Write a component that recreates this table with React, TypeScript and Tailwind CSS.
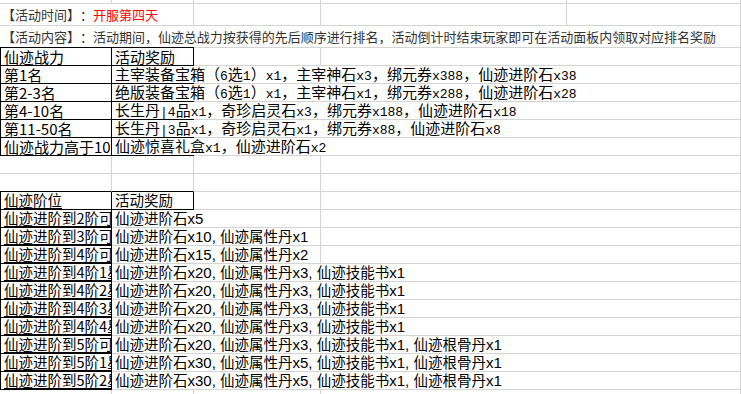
import { useLayoutEffect, useRef, useState } from 'react'
import type { ReactNode } from 'react'

type Edge = 'g' | 'k' | 'n'

interface CellSpec {
  content?: ReactNode
  r?: Edge
  b?: Edge
  l?: boolean
  cls?: string
}

const widths = ['w-[112px]', 'w-[82px]', 'w-[127px]', 'w-[246px]', 'flex-1']

const rightCls: Record<Edge, string> = {
  g: 'border-r border-r-[#d4d4d4]',
  k: 'border-r border-r-black',
  n: '',
}

const bottomCls: Record<Edge, string> = {
  g: 'border-b border-b-[#d4d4d4]',
  k: 'border-b border-b-black',
  n: '',
}

// splits ascii runs out so they can take a different latin font
function Mixed({ text, latin }: { text: string; latin: string }) {
  const parts = text.split(/([\x20-\x7e]+)/)
  return (
    <span>
      {parts.map((p, i) =>
        i % 2 ? (
          <span key={i} className={latin}>
            {p}
          </span>
        ) : (
          p
        )
      )}
    </span>
  )
}

// squeezes a line of text so it covers exactly `target` px
function FitText({ children, target }: { children: ReactNode; target: number }) {
  const ref = useRef<HTMLSpanElement>(null)
  const [scale, setScale] = useState(1)
  useLayoutEffect(() => {
    if (ref.current) {
      const w = ref.current.offsetWidth
      if (w > 0) setScale(target / w)
    }
  }, [target])
  return (
    <span ref={ref} className="inline-block origin-left" style={{ transform: `scaleX(${scale})` }}>
      {children}
    </span>
  )
}

function Row({ cells, h = 'h-[18px]' }: { cells: CellSpec[]; h?: string }) {
  return (
    <div className={`flex ${h}`}>
      {widths.map((w, i) => {
        const c = cells[i] || {}
        return (
          <div
            key={i}
            className={`${w} shrink-0 flex items-center whitespace-nowrap ${rightCls[c.r || 'g']} ${bottomCls[c.b || 'g']} ${
              c.l ? 'border-l border-l-black' : ''
            } ${c.cls || ''}`}
          >
            {c.content}
          </div>
        )
      })}
    </div>
  )
}

const t1Latin = "font-['Liberation_Mono',monospace] text-[13px]"
const t2Latin = "font-['Liberation_Sans',sans-serif] text-[15px]"

const firstTable = [
  { a: '第1名', b: '主宰装备宝箱（6选1）x1，主宰神石x3，绑元券x388，仙迹进阶石x38', span: 4 },
  { a: '第2-3名', b: '绝版装备宝箱（6选1）x1，主宰神石x1，绑元券x288，仙迹进阶石x28', span: 4 },
  { a: '第4-10名', b: '长生丹|4品x1，奇珍启灵石x3，绑元券x188，仙迹进阶石x18', span: 3 },
  { a: '第11-50名', b: '长生丹|3品x1，奇珍启灵石x1，绑元券x88，仙迹进阶石x8', span: 3 },
  { a: '仙迹战力高于100万', b: '仙迹惊喜礼盒x1，仙迹进阶石x2', span: 3 },
]

const secondTable = [
  { a: '仙迹进阶到2阶可领取', b: '仙迹进阶石x5', span: 2 },
  { a: '仙迹进阶到3阶可领取', b: '仙迹进阶石x10, 仙迹属性丹x1', span: 2 },
  { a: '仙迹进阶到4阶可领取', b: '仙迹进阶石x15, 仙迹属性丹x2', span: 2 },
  { a: '仙迹进阶到4阶1星可领取', b: '仙迹进阶石x20, 仙迹属性丹x3, 仙迹技能书x1', span: 3 },
  { a: '仙迹进阶到4阶2星可领取', b: '仙迹进阶石x20, 仙迹属性丹x3, 仙迹技能书x1', span: 3 },
  { a: '仙迹进阶到4阶3星可领取', b: '仙迹进阶石x20, 仙迹属性丹x3, 仙迹技能书x1', span: 3 },
  { a: '仙迹进阶到4阶4星可领取', b: '仙迹进阶石x20, 仙迹属性丹x3, 仙迹技能书x1', span: 3 },
  { a: '仙迹进阶到5阶可领取', b: '仙迹进阶石x20, 仙迹属性丹x3, 仙迹技能书x1, 仙迹根骨丹x1', span: 3 },
  { a: '仙迹进阶到5阶1星可领取', b: '仙迹进阶石x30, 仙迹属性丹x5, 仙迹技能书x1, 仙迹根骨丹x1', span: 3 },
  { a: '仙迹进阶到5阶2星可领取', b: '仙迹进阶石x30, 仙迹属性丹x5, 仙迹技能书x1, 仙迹根骨丹x1', span: 3 },
]

export default function App() {
  return (
    <div className="w-[741px] h-[394px] overflow-hidden bg-white text-black font-['Noto_Sans_CJK_SC',sans-serif] leading-none [text-spacing-trim:space-all]">
      <Row h="h-[4px]" cells={[]} />
      <Row
        h="h-[22px]"
        cells={[
          {
            r: 'n',
            cls: 'pl-[2px] text-[13px] text-[#333]',
            content: (
              <span>
                【活动时间】：<span className="text-[#ff0000]">开服第四天</span>
              </span>
            ),
          },
          {},
          {},
          {},
        ]}
      />
      <Row
        h="h-[22px]"
        cells={[
          {
            r: 'n',
            b: 'k',
            cls: 'pl-[2px] text-[13px] text-[#333]',
            content: (
              <span>
                【活动内容】：
                <FitText target={623}>
                  活动期间，仙迹总战力按获得的先后顺序进行排名，活动倒计时结束玩家即可在活动面板内领取对应排名奖励
                </FitText>
              </span>
            ),
          },
          { r: 'n', b: 'k' },
          { r: 'n' },
          { r: 'n' },
        ]}
      />
      <Row
        cells={[
          { r: 'k', b: 'k', l: true, cls: 'pl-[3px] text-[15px]', content: <span className="underline underline-offset-2">仙迹战力</span> },
          { r: 'k', b: 'k', cls: 'pl-[3px] text-[15px]', content: '活动奖励' },
          {},
          { r: 'n' },
        ]}
      />
      {firstTable.map((row) => (
        <Row
          key={row.a}
          cells={[
            {
              r: 'k',
              b: 'k',
              l: true,
              cls: 'pl-[3px] text-[15px] overflow-hidden',
              content: <span className={row.a.startsWith('仙') ? 'underline underline-offset-2' : ''}>{row.a}</span>,
            },
            { r: 'n', b: 'k', cls: 'pl-[3px] text-[15px]', content: <Mixed text={row.b} latin={t1Latin} /> },
            { r: row.span > 2 ? 'n' : 'g' },
            { r: 'n' },
          ]}
        />
      ))}
      <Row cells={[{}, {}, {}, { r: 'n' }]} />
      <Row cells={[{ b: 'k' }, { b: 'k' }, {}, { r: 'n' }]} />
      <Row
        cells={[
          { r: 'k', b: 'k', l: true, cls: 'pl-[3px] text-[14.5px]', content: <span className="underline underline-offset-2">仙迹阶位</span> },
          { r: 'k', b: 'k', cls: 'pl-[3px] text-[14.5px]', content: '活动奖励' },
          {},
          { r: 'n' },
        ]}
      />
      {secondTable.map((row) => (
        <Row
          key={row.a}
          cells={[
            {
              r: 'k',
              b: 'k',
              l: true,
              cls: 'pl-[3px] text-[14.5px] overflow-hidden',
              content: <span className="underline underline-offset-2">{row.a}</span>,
            },
            { r: 'n', cls: 'pl-[3px] text-[14.5px]', content: <Mixed text={row.b} latin={t2Latin} /> },
            { r: row.span > 2 ? 'n' : 'g' },
            { r: 'n' },
          ]}
        />
      ))}
      <Row cells={[{}, {}, {}, { r: 'n' }]} />
    </div>
  )
}
